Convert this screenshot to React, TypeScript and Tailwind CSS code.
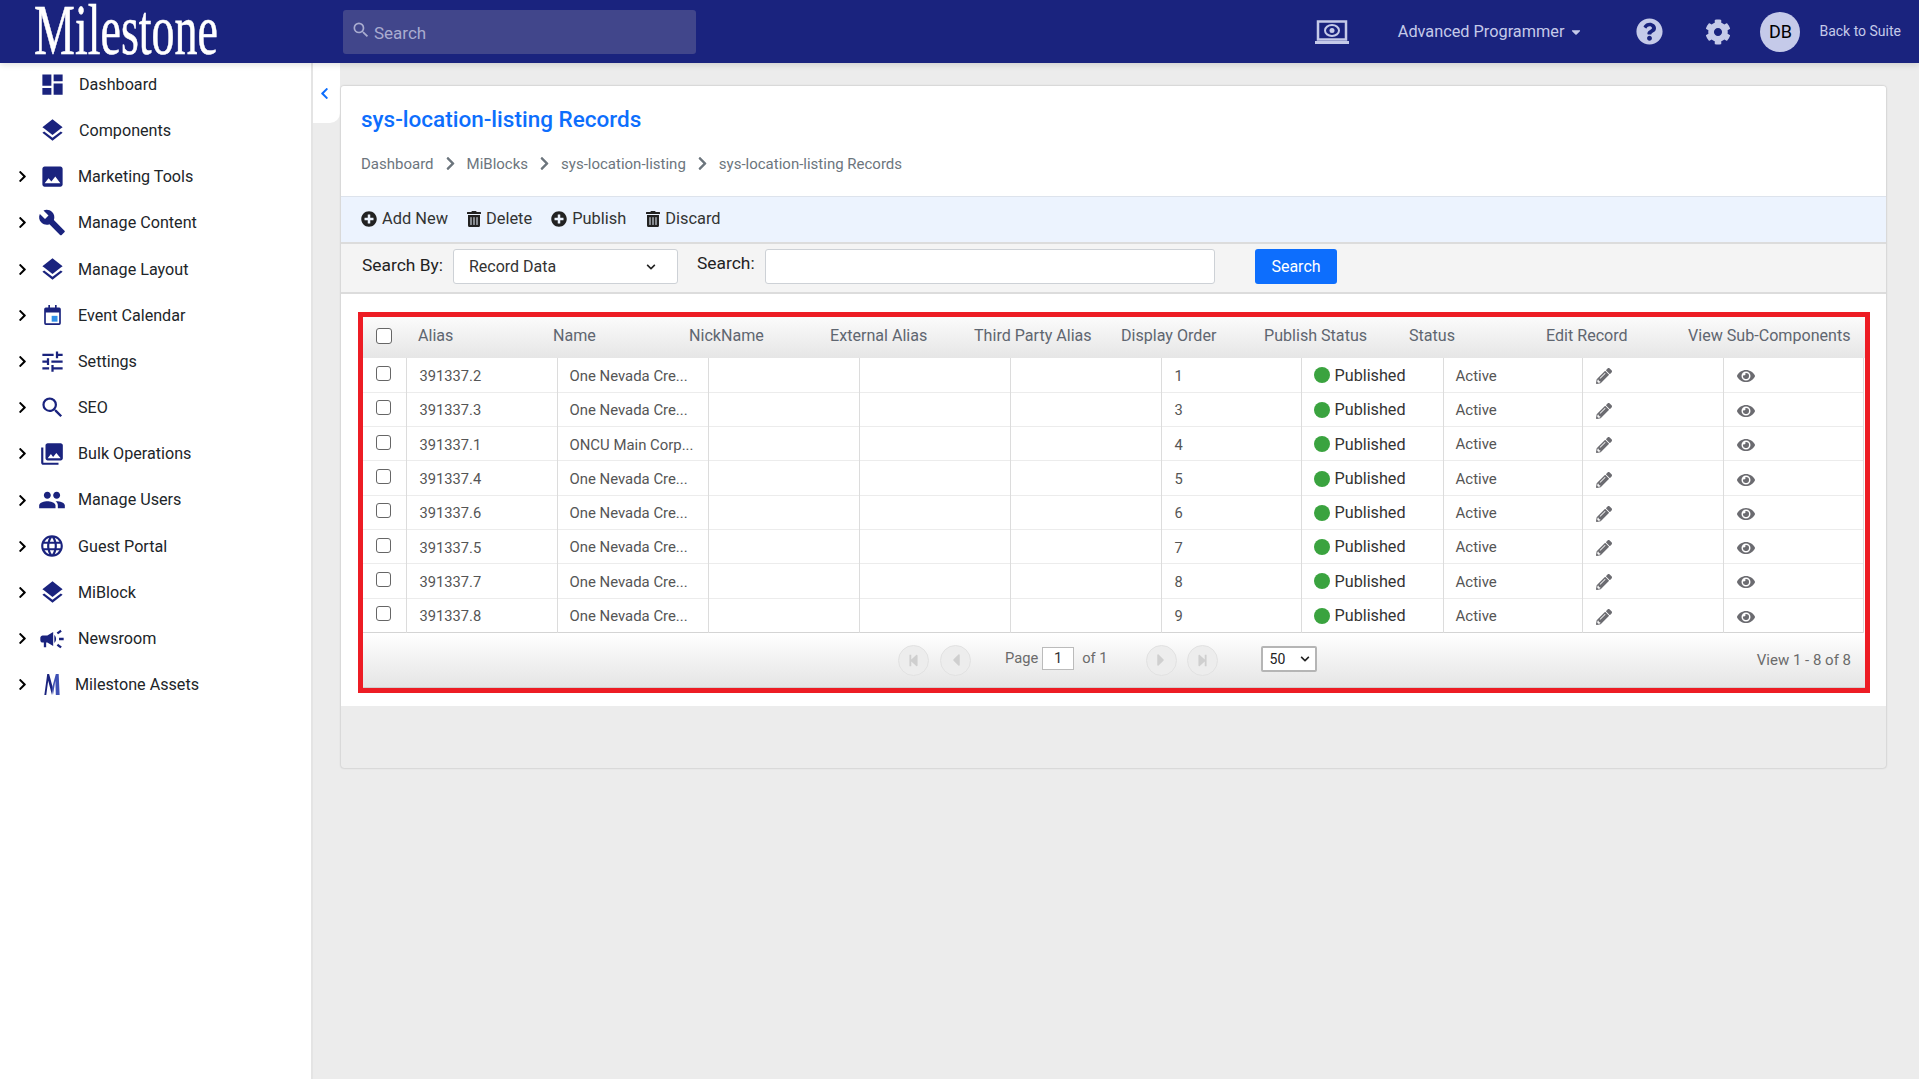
import React from "react";
import { MdDashboard, MdLayers, MdPhoto, MdBuild, MdTune, MdSearch, MdPhotoLibrary, MdPeople, MdLanguage, MdCampaign } from "react-icons/md";
import { FaChevronRight, FaChevronLeft, FaPlusCircle, FaTrashAlt, FaPencilAlt, FaEye, FaQuestionCircle, FaCog, FaStepBackward, FaCaretLeft, FaCaretRight, FaStepForward, FaCaretDown, FaChevronDown } from "react-icons/fa";

const Cal = () => (
  <svg viewBox="0 0 20 24" className="w-[17px] h-[20px]" fill="#1a237e">
    <path d="M2 3h3V0h2v3h6V0h2v3h3a2 2 0 0 1 2 2v17a2 2 0 0 1-2 2H2a2 2 0 0 1-2-2V5a2 2 0 0 1 2-2zm0 6v13h16V9z" />
    <rect x="9" y="13" width="7" height="7" fill="#2f8fe8" />
  </svg>
);
const MLogo = () => (
  <svg viewBox="0 0 16 22" className="w-[16px] h-[21px]">
    <path d="M0 22 L3 0 L5 0 L9 15 L8 22 L4 7 L2 22z" fill="#1a237e" />
    <path d="M8 15 L12 0 L15 0 L16 22 L12 22 L11.5 7 L9 22z" fill="#3f51b5" />
  </svg>
);

const nav: [string, React.ReactNode, boolean, string][] = [
  ["Dashboard", <MdDashboard size={27} color="#1a237e" />, false, "left-[79px]"],
  ["Components", <MdLayers size={27} color="#1a237e" />, false, "left-[79px]"],
  ["Marketing Tools", <MdPhoto size={27} color="#1a237e" />, true, "left-[78px]"],
  ["Manage Content", <MdBuild size={29} color="#1a237e" />, true, "left-[78px]"],
  ["Manage Layout", <MdLayers size={27} color="#1a237e" />, true, "left-[78px]"],
  ["Event Calendar", <Cal />, true, "left-[78px]"],
  ["Settings", <MdTune size={27} color="#1a237e" />, true, "left-[78px]"],
  ["SEO", <MdSearch size={27} color="#1a237e" />, true, "left-[78px]"],
  ["Bulk Operations", <MdPhotoLibrary size={26} color="#1a237e" />, true, "left-[78px]"],
  ["Manage Users", <MdPeople size={28} color="#1a237e" />, true, "left-[78px]"],
  ["Guest Portal", <MdLanguage size={26} color="#1a237e" />, true, "left-[78px]"],
  ["MiBlock", <MdLayers size={27} color="#1a237e" />, true, "left-[78px]"],
  ["Newsroom", <MdCampaign size={28} color="#1a237e" />, true, "left-[78px]"],
  ["Milestone Assets", <MLogo />, true, "left-[75px]"],
];

const headers: [string, string][] = [
  ["Alias", "w-[135px]"],
  ["Name", "w-[136px]"],
  ["NickName", "w-[141px]"],
  ["External Alias", "w-[144px]"],
  ["Third Party Alias", "w-[147px]"],
  ["Display Order", "w-[143px]"],
  ["Publish Status", "w-[145px]"],
  ["Status", "w-[137px]"],
  ["Edit Record", "w-[142px]"],
  ["View Sub-Components", "w-[176px]"],
];

const rows = [
  ["391337.2", "One Nevada Cre...", "1"],
  ["391337.3", "One Nevada Cre...", "3"],
  ["391337.1", "ONCU Main Corp...", "4"],
  ["391337.4", "One Nevada Cre...", "5"],
  ["391337.6", "One Nevada Cre...", "6"],
  ["391337.5", "One Nevada Cre...", "7"],
  ["391337.7", "One Nevada Cre...", "8"],
  ["391337.8", "One Nevada Cre...", "9"],
];

const Pager = ({ children }: { children: React.ReactNode }) => (
  <span className="w-[31px] h-[31px] rounded-full border border-[#e2e2e2] bg-[#ededed] flex items-center justify-center text-[#cfcfcf]">
    {children}
  </span>
);

const Crumb = () => <FaChevronRight size={15} color="#6c757d" className="mx-[9px] -mt-[2px]" />;

export default function App() {
  return (
    <div className="w-[1919px] h-[1079px] overflow-hidden bg-[#ececec] flex flex-col font-['Roboto',sans-serif] text-[#212529]">
      <header className="h-[63px] shrink-0 bg-[#1a237e] flex items-center relative z-10 shadow-[0_2px_6px_rgba(0,0,0,0.12)]">
        <div className="w-[343px] pl-[34px] shrink-0">
          <svg width="186" height="63" viewBox="0 0 186 63" className="overflow-visible">
            <text x="0" y="54" fontFamily="'Liberation Serif', serif" fontSize="72" fill="#fff" stroke="#fff" strokeWidth="0.6" textLength="184" lengthAdjust="spacingAndGlyphs">Milestone</text>
          </svg>
        </div>
        <div className="w-[353px] h-[44px] bg-[#41468b] rounded-[3px] flex items-center pl-[8px] text-[#a9acd0] text-[17px]">
          <MdSearch size={20} color="#a9acd0" className="mr-[3px] -mt-[4px]" />
          <span className="mt-[4px]">Search</span>
        </div>
        <div className="flex-1" />
        <svg viewBox="0 0 34 24" className="w-[34px] h-[24px] mr-[49px]" fill="none" stroke="#c5cae9">
          <rect x="3" y="1.5" width="28" height="18" strokeWidth="2.5" />
          <path d="M0 22.5h34" strokeWidth="3" />
          <ellipse cx="17" cy="10.5" rx="7" ry="5.5" strokeWidth="2" />
          <circle cx="17" cy="10.5" r="2.5" fill="#c5cae9" stroke="none" />
        </svg>
        <span className="text-[#c5cae9] text-[16.3px] leading-none mt-[1px]">Advanced Programmer</span>
        <FaCaretDown size={14} color="#c5cae9" className="ml-[5px] mr-[53px]" />
        <FaQuestionCircle size={27} color="#c5cae9" className="mr-[42px]" />
        <FaCog size={26} color="#c5cae9" className="mr-[29px]" />
        <span className="w-[40px] h-[40px] rounded-full bg-[#c5cae9] text-black text-[18px] flex items-center justify-center">DB</span>
        <span className="ml-[19px] mr-[18px] text-[#c5cae9] text-[14px]">Back to Suite</span>
      </header>

      <div className="flex-1 flex min-h-0">
        <aside className="w-[313px] shrink-0 bg-white border-r-2 border-[#e4e4e4]">
          <ul className="-mt-[1.7px]">
            {nav.map(([label, icon, arrow, left]) => (
              <li key={label} className="h-[46.2px] flex items-center relative">
                {arrow && <FaChevronRight size={13} color="#000" className="absolute left-[16px]" />}
                <span className="absolute left-[38px] w-[28px] flex justify-center">{icon}</span>
                <span className={`absolute mt-[1px] text-[16.15px] text-[#212529] ${left}`}>{label}</span>
              </li>
            ))}
          </ul>
        </aside>

        <div className="w-[27px] h-[60px] shrink-0 bg-white rounded-br-[10px] flex justify-center items-center pr-[5px]">
          <FaChevronLeft size={13} color="#0d6efd" />
        </div>

        <main className="flex-1 pt-[23px] pl-[1px] pr-[33px]">
          <section className="h-[682px] rounded-[3px] bg-[#ececec] shadow-[0_0_2px_rgba(0,0,0,0.3)] flex flex-col overflow-hidden">
            <div className="h-[110px] shrink-0 bg-white pl-[20px] pt-[17px]">
              <h1 className="text-[22.5px] leading-[32px] font-medium text-[#0d6efd]">sys-location-listing Records</h1>
              <nav className="mt-[19px] flex items-center text-[15px] leading-[20px] text-[#6c757d]">
                <span>Dashboard</span><Crumb /><span>MiBlocks</span><Crumb /><span>sys-location-listing</span><Crumb /><span>sys-location-listing Records</span>
              </nav>
            </div>

            <div className="h-[46px] shrink-0 bg-[#ecf3fe] border-t border-[#dde3ec] flex items-center pl-[20px] pb-[1px] text-[16.4px] text-[#333]">
              <FaPlusCircle size={16} color="#222" className="mr-[5px] -mt-[1px]" />
              <span className="mr-[18px]">Add New</span>
              <FaTrashAlt size={16} color="#222" className="mr-[4px] -mt-[1px]" />
              <span className="mr-[19px]">Delete</span>
              <FaPlusCircle size={16} color="#222" className="mr-[5px] -mt-[1px]" />
              <span className="mr-[19px]">Publish</span>
              <FaTrashAlt size={16} color="#222" className="mr-[4px] -mt-[1px]" />
              <span>Discard</span>
            </div>

            <div className="h-[52px] shrink-0 bg-[#f4f4f4] border-y-2 border-[#dcdcdc] flex items-center pl-[21px] pb-[3px] text-[17.4px] text-[#222]">
              <span className="w-[91px] -mt-[3px]">Search By:</span>
              <div className="w-[225px] h-[35px] bg-white border border-[#cdd1d6] rounded-[3px] flex items-center justify-between pl-[15px] pr-[21px] text-[16px] text-[#333]">
                <span>Record Data</span>
                <FaChevronDown size={10} color="#222" />
              </div>
              <span className="ml-[19px] w-[68px] -mt-[7px]">Search:</span>
              <div className="w-[450px] h-[35px] bg-white border border-[#cdd1d6] rounded-[3px]" />
              <button className="ml-[40px] w-[82px] h-[35px] rounded-[3px] bg-[#0d6efd] text-white text-[16px]">Search</button>
            </div>

            <div className="h-[412px] shrink-0 bg-white pl-[17px] pt-[18px]">
              <div className="w-[1512px] h-[381px] border-[5px] border-[#ed1c24] flex flex-col">
                <div className="h-[41px] shrink-0 flex items-center pb-[2px] bg-gradient-to-b from-[#fbfbfb] to-[#e6e6e6] text-[16.1px] text-[#5f6670]">
                  <span className="w-[55px] shrink-0 pl-[13px]">
                    <span className="block w-[16px] h-[16px] bg-white border border-[#666] rounded-[3px] -mt-[1px]" />
                  </span>
                  {headers.map(([h, w]) => (
                    <span key={h} className={`${w} shrink-0 whitespace-nowrap`}>{h}</span>
                  ))}
                </div>
                <table className="table-fixed border-collapse w-[1500px] text-[14.7px] text-[#555]">
                  <colgroup>
                    <col className="w-[43px]" />
                    <col className="w-[151px]" />
                    <col className="w-[151px]" />
                    <col className="w-[151px]" />
                    <col className="w-[151px]" />
                    <col className="w-[151px]" />
                    <col className="w-[140px]" />
                    <col className="w-[142px]" />
                    <col className="w-[139px]" />
                    <col className="w-[141px]" />
                    <col className="w-[140px]" />
                  </colgroup>
                  <tbody>
                    {rows.map(([a, n, o]) => (
                      <tr key={a} className="h-[34.3px] border-b border-[#ececec] last:border-[#d4d4d4]">
                        <td className="pl-[13px] border-r border-[#dcdcdc]">
                          <span className="block w-[15px] h-[15px] bg-white border border-[#666] rounded-[3px] -mt-[3px]" />
                        </td>
                        <td className="pl-[13px] pt-[2px] border-r border-[#dcdcdc]">{a}</td>
                        <td className="pl-[12px] pt-[2px] border-r border-[#dcdcdc] text-[14.9px]">{n}</td>
                        <td className="border-r border-[#dcdcdc]" />
                        <td className="border-r border-[#dcdcdc]" />
                        <td className="border-r border-[#dcdcdc]" />
                        <td className="pl-[13px] pt-[2px] border-r border-[#dcdcdc]">{o}</td>
                        <td className="pl-[12px] pt-[2px] border-r border-[#dcdcdc]">
                          <span className="flex items-center text-[16.2px] text-[#333]">
                            <span className="w-[16px] h-[16px] rounded-full bg-[#3aa33f] mr-[5px] -mt-[1px]" />Published
                          </span>
                        </td>
                        <td className="pl-[12px] pt-[2px] border-r border-[#dcdcdc] text-[15px]">Active</td>
                        <td className="pl-[13px] pt-[3px] border-r border-[#dcdcdc]"><FaPencilAlt size={16} color="#6b6b70" /></td>
                        <td className="pl-[13px] pt-[3px] border-r border-[#dcdcdc]"><FaEye size={18} color="#6b6b70" /></td>
                      </tr>
                    ))}
                  </tbody>
                </table>
                <div className="flex-1 bg-gradient-to-b from-[#ffffff] to-[#e5e5e5] border-b border-[#cfcfcf] text-[14.7px] text-[#6b6b6b] relative">
                  <div className="absolute left-[535px] top-[12px] flex items-center">
                    <Pager><FaStepBackward size={13} /></Pager>
                    <span className="w-[11px]" />
                    <Pager><FaCaretLeft size={20} /></Pager>
                    <span className="ml-[34px] mr-[4px] -mt-[5px]">Page</span>
                    <span className="w-[32px] h-[23px] -mt-[4px] border border-[#bbb] bg-white text-[#333] flex items-center justify-center">1</span>
                    <span className="ml-[8px] -mt-[5px]">of 1</span>
                    <span className="w-[38px]" />
                    <Pager><FaCaretRight size={20} /></Pager>
                    <span className="w-[10px]" />
                    <Pager><FaStepForward size={13} /></Pager>
                    <span className="ml-[43px] -mt-[2px] w-[56px] h-[26px] border-2 border-[#b5b5b5] rounded-[2px] bg-white text-[#222] text-[14px] flex items-center justify-between pl-[7px] pr-[5px]">
                      50 <FaChevronDown size={10} color="#222" />
                    </span>
                  </div>
                  <span className="absolute right-[14px] top-[16px] text-[15px]">View 1 - 8 of 8</span>
                </div>
              </div>
            </div>
          </section>
        </main>
      </div>
    </div>
  );
}
